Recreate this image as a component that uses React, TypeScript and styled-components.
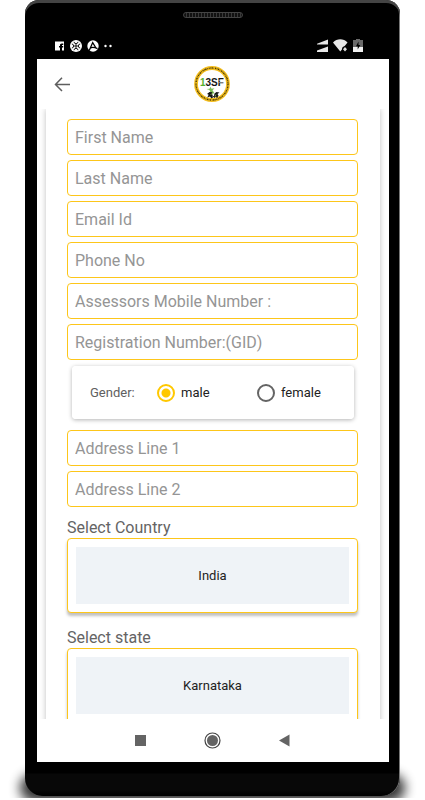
import React, { useId, useState } from "react";
import styled, { createGlobalStyle } from "styled-components";

const GlobalStyle = createGlobalStyle`
  *, *::before, *::after { box-sizing: border-box; }
  body { margin: 0; background: #fff; font-family: Roboto, sans-serif; }
  button, input, select { font-family: inherit; }
`;

const amber = "#fdc61a";

const Stage = styled.div`
  height: 100vh;
  padding: 0 25px 4px;
  overflow: hidden;
`;

const Phone = styled.div`
  position: relative;
  display: flex;
  flex-direction: column;
  height: 100%;
`;

const Shadow = styled.div`
  position: absolute;
  z-index: -1;
  left: -25px;
  right: -25px;
  bottom: -2px;
  height: 40px;
  overflow: hidden;

  &::before {
    content: "";
    position: absolute;
    left: 20px;
    right: 20px;
    bottom: -4px;
    height: 28px;
    border-radius: 18px;
    background: #000;
    filter: blur(6px);
    opacity: 0.8;
  }
`;

const Shell = styled.div`
  flex: 1;
  min-height: 0;
  display: flex;
  flex-direction: column;
  padding: 0 11px 0 12px;
  border-radius: 14px 14px 18px 18px;
  background: linear-gradient(to top, #000 0, #080808 6px, #080808 22px, #000 23px);
  box-shadow: inset 0 3px 0 #444, inset -1px 0 0 #777;
`;

const TopBezel = styled.div`
  height: 59px;
  display: flex;
  flex-direction: column;
  align-items: center;
  padding-top: 12px;
`;

const Speaker = styled.div`
  width: 60px;
  height: 6px;
  border: 1px solid #444;
  border-radius: 3px;
  background: repeating-linear-gradient(90deg, #111 0 2px, #383838 2px 3px);
`;

const StatusBar = styled.div`
  align-self: stretch;
  display: flex;
  justify-content: space-between;
  align-items: center;
  margin-top: 21px;
  padding: 0 26px 0 18px;
`;

const StatusGroup = styled.div<{ $gap: number }>`
  display: flex;
  align-items: center;
  gap: ${(p) => p.$gap}px;
`;

const Screen = styled.main`
  flex: 1;
  min-height: 0;
  display: flex;
  flex-direction: column;
  background: #fff;
`;

const Header = styled.header`
  display: grid;
  grid-template-columns: 1fr auto 1fr;
  align-items: center;
  height: 50px;
  padding: 0 16px 0 14px;
`;

const IconButton = styled.button`
  display: flex;
  align-items: center;
  justify-content: center;
  justify-self: start;
  padding: 0;
  border: 0;
  background: none;
`;

const Scroller = styled.div`
  flex: 1;
  min-height: 0;
  overflow: hidden auto;
  scrollbar-width: none;
`;

const Panel = styled.form`
  margin: 0 9px;
  padding: 10px 22px 20px 21px;
  background: #fff;
  box-shadow: 0 0 6px rgba(0, 0, 0, 0.25);
`;

const Fields = styled.div`
  display: flex;
  flex-direction: column;
  gap: 5px;
`;

const TextField = styled.input`
  width: 100%;
  height: 36px;
  padding: 0 7px;
  border: 1px solid ${amber};
  border-radius: 4px;
  outline: 0;
  background: #fff;
  color: #222;
  font-size: 16px;

  &::placeholder { color: #959595; opacity: 1; }
`;

const GenderCard = styled.fieldset`
  display: grid;
  grid-template-columns: 67px 100px 1fr;
  align-items: center;
  height: 53px;
  margin: 6px 4px 11px 5px;
  padding: 0 0 0 18px;
  border: 0;
  border-radius: 4px;
  background: #fff;
  box-shadow: 0 1px 4px rgba(0, 0, 0, 0.3);
`;

const GenderLabel = styled.span`
  color: #606060;
  font-size: 13px;
`;

const RadioLabel = styled.label`
  display: flex;
  align-items: center;
  gap: 6px;
  color: #222;
  font-size: 13px;
`;

const Radio = styled.input`
  appearance: none;
  width: 18px;
  height: 18px;
  margin: 0;
  border: 2px solid #646464;
  border-radius: 50%;
  background: #fff;

  &:checked {
    border-color: #ffc800;
    background: radial-gradient(circle, #ffc800 4px, #fff 5px);
  }
`;

const SelectGroup = styled.div`
  display: flex;
  flex-direction: column;
  margin-top: 11px;

  & + & { margin-top: 15px; }
`;

const SelectLabel = styled.label`
  color: #646464;
  font-size: 16px;
  line-height: 20px;
`;

const SelectFrame = styled.div`
  padding: 8px;
  border: 1px solid ${amber};
  border-radius: 4px;
  background: #fff;
  box-shadow: 0 3px 3px rgba(0, 0, 0, 0.25);
`;

const Select = styled.select`
  display: block;
  appearance: none;
  width: 100%;
  height: 57px;
  border: 0;
  border-radius: 0;
  background: #eff3f7;
  color: #222;
  font-size: 13px;
  text-align: center;
  text-align-last: center;
`;

const NavBar = styled.nav`
  display: flex;
  justify-content: center;
  height: 43px;
  padding-right: 2px;
`;

const NavButton = styled(IconButton)`
  width: 72px;
`;

const NavSvg = styled.svg`
  display: block;
`;

function Logo() {
  return (
    <svg width="36" height="36" viewBox="0 0 36 36" role="img" aria-label="13SF">
      <circle cx="18" cy="18" r="16" fill="#fff" stroke="#f5bf1f" strokeWidth="3.800" />
      <circle cx="18" cy="18" r="16" fill="none" stroke="#4a3b08" strokeWidth="1.400" strokeDasharray="1.1 .6 .7 .5 1.4 .7 .6 .9" />
      <text x="6" y="19.500" fontFamily="Liberation Sans" fontWeight="bold" fontSize="10" fill="#161616">
        <tspan fill="#55b030">1</tspan>3SF
      </text>
      <path d="M24.500 14.300h6M24.500 16.600h6" stroke="#fff" strokeWidth=".5" />
      <path d="M17 28l-1.500-4-3-1 3-.3 1-2 1 2 3-.5-2 2 2 3z" fill="#7abd55" />
      <path d="M13 31.500c1-1 1.500-2 1.500-3l-1.500-.5 2.500-2 3 .3-1 1.700 1.500 1-1 1.500 2-.5.500-2.500 2-1.500 3 .5-2 1.500 1 1.500-1.500 3-1-2-1.500 1.500-1-1-2 1.500-1.500-2z" fill="#161616" />
      <path d="M16.500 29l1.500-1.500M21 30.500l1-2" stroke="#76b04f" strokeWidth=".8" />
    </svg>
  );
}

function StatusIcons() {
  return (
    <StatusBar>
      <StatusGroup $gap={5}>
        <svg width="10" height="12" viewBox="0 0 10 12">
          <path d="M0 1.500h9v9H7V7.400h1.200V6H7V5h1.300V3.400H6.800C5.500 3.400 5 4.200 5 5v1H4v1.400h1v3.100H0z" fill="#fff" />
        </svg>
        <svg width="12" height="12" viewBox="0 0 12 12">
          <circle cx="6" cy="6" r="6" fill="#fff" />
          <path d="M6 3.500v5M3.500 6h5M4 1.800a2 1.800 0 0 0 4 0M4 10.200a2 1.800 0 0 1 4 0M1.800 4a1.800 2 0 0 1 0 4M10.200 4a1.800 2 0 0 0 0 4" stroke="#000" strokeWidth=".9" fill="none" />
        </svg>
        <svg width="12" height="12" viewBox="0 0 12 12">
          <circle cx="6" cy="6" r="5.700" fill="#fff" />
          <path d="M2.200 10.500L5.700 2.600 9 8M3.500 7.800c2-.8 4-.6 7 .8" stroke="#000" strokeWidth="1.300" fill="none" />
        </svg>
        <svg width="9" height="12" viewBox="0 0 9 12">
          <circle cx="1.500" cy="6" r="1.200" fill="#fff" />
          <circle cx="6.500" cy="6" r="1.200" fill="#fff" />
        </svg>
      </StatusGroup>
      <StatusGroup $gap={5}>
        <svg width="11" height="13" viewBox="0 0 11 13">
          <path d="M11 .5v5H0v-.8zM11 7.500V13H0v-1.500z" fill="#e8e8e8" />
        </svg>
        <svg width="15" height="13" viewBox="0 0 15 13">
          <path d="M0 3.500C4-.8 10.500-.8 14.500 3.500L7.300 12.500z" fill="#e8e8e8" />
          <circle cx="12" cy="10.200" r="3" fill="#000" />
          <path d="M12 8l2 2.200-2 2.200-2-2.200z" fill="#ddd" />
        </svg>
        <svg width="10" height="13" viewBox="0 0 10 13">
          <path d="M3 0h4v1h3v7H0V1h3z" fill="#6a6a6a" />
          <path d="M0 8h10v5H0z" fill="#f0f0f0" />
          <path d="M5.500 2.500L3 7.300h1.700V10.500L7.300 6H5.500z" fill="#000" />
        </svg>
      </StatusGroup>
    </StatusBar>
  );
}

function Picker({ label, options }: { label: string; options: string[] }) {
  const id = useId();
  return (
    <SelectGroup>
      <SelectLabel htmlFor={id}>{label}</SelectLabel>
      <SelectFrame>
        <Select id={id}>
          {options.map((o) => (
            <option key={o}>{o}</option>
          ))}
        </Select>
      </SelectFrame>
    </SelectGroup>
  );
}

const personal = [
  "First Name",
  "Last Name",
  "Email Id",
  "Phone No",
  "Assessors Mobile Number :",
  "Registration Number:(GID)",
];
const address = ["Address Line 1", "Address Line 2"];

function FieldList({ names }: { names: string[] }) {
  return (
    <Fields>
      {names.map((name) => (
        <TextField key={name} type="text" placeholder={name} aria-label={name} />
      ))}
    </Fields>
  );
}

const BottomBezel = styled.div`
  height: 34px;
`;

export default function App() {
  const [gender, setGender] = useState("male");
  return (
    <Stage>
      <GlobalStyle />
      <Phone>
        <Shadow />
        <Shell>
          <TopBezel>
            <Speaker />
            <StatusIcons />
          </TopBezel>
          <Screen>
            <Header>
              <IconButton type="button" aria-label="Back">
                <svg width="24" height="24" viewBox="0 0 24 24">
                  <path d="M19 12.500H4.800M11 5.800L4.500 12.500 11 19" fill="none" stroke="#5e5e5e" strokeWidth="1.500" />
                </svg>
              </IconButton>
              <Logo />
            </Header>
            <Scroller>
              <Panel>
                <FieldList names={personal} />
                <GenderCard aria-label="Gender">
                  <GenderLabel>Gender:</GenderLabel>
                  {["male", "female"].map((g) => (
                    <RadioLabel key={g}>
                      <Radio type="radio" name="gender" checked={gender === g} onChange={() => setGender(g)} />
                      {g}
                    </RadioLabel>
                  ))}
                </GenderCard>
                <FieldList names={address} />
                <Picker label="Select Country" options={["India"]} />
                <Picker label="Select state" options={["Karnataka"]} />
              </Panel>
            </Scroller>
            <NavBar>
              <NavButton type="button" aria-label="Recent apps">
                <NavSvg width="11" height="11" viewBox="0 0 11 11">
                  <path d="M0 0h11v11H0z" fill="#646464" />
                </NavSvg>
              </NavButton>
              <NavButton type="button" aria-label="Home">
                <NavSvg width="17" height="17" viewBox="0 0 17 17">
                  <circle cx="8.500" cy="8.500" r="7.500" fill="#fff" stroke="#444" strokeWidth="1.200" />
                  <circle cx="8.500" cy="8.500" r="5.500" fill="#646464" />
                </NavSvg>
              </NavButton>
              <NavButton type="button" aria-label="Go back">
                <NavSvg width="11" height="13" viewBox="0 0 11 13">
                  <path d="M10.500 .5v12L0 6.500z" fill="#646464" />
                </NavSvg>
              </NavButton>
            </NavBar>
          </Screen>
          <BottomBezel />
        </Shell>
      </Phone>
    </Stage>
  );
}
